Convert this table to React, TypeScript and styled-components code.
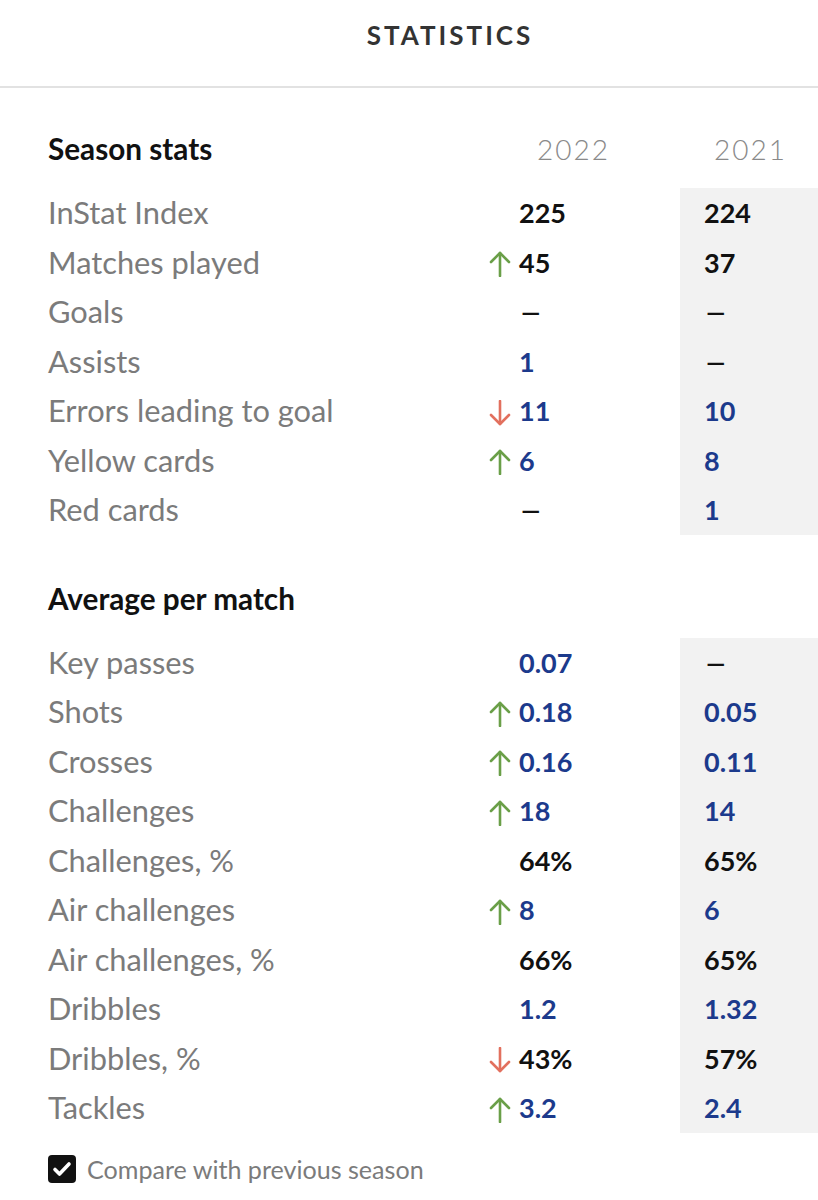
import React from "react";
import styled, { createGlobalStyle } from "styled-components";

const Global = createGlobalStyle`
  html, body { margin: 0; padding: 0; background: #ffffff; }
  body { font-family: "Lato", "Noto Sans", sans-serif; -webkit-font-smoothing: antialiased; }
  * { box-sizing: border-box; }
`;

const Page = styled.div`
  width: 818px;
  background: #fff;
`;

const TitleBar = styled.header`
  height: 88px;
  display: flex;
  align-items: center;
  justify-content: center;
  border-bottom: 2px solid #e2e2e2;
  padding: 0 0 16px 82px;
`;

const Title = styled.h1`
  margin: 0;
  font-size: 26px;
  font-weight: 700;
  letter-spacing: 3px;
  color: #333;
`;

const Section = styled.section<{ $top: number }>`
  margin-top: ${(p) => p.$top}px;
  display: grid;
  grid-template-columns: 1fr 200px 138px;
`;

const HeadLabel = styled.div`
  height: 76px;
  display: flex;
  align-items: center;
  padding-left: 48px;
  padding-bottom: 3px;
  font-size: 29.7px;
  font-weight: 700;
  color: #111;
`;

const Year = styled.div<{ $pad: number }>`
  height: 76px;
  display: flex;
  align-items: center;
  padding-left: ${(p) => p.$pad}px;
  padding-bottom: 3px;
  font-size: 28px;
  font-weight: 300;
  letter-spacing: 2px;
  color: #8a8a8a;
`;

const Label = styled.div`
  height: 49.5px;
  display: flex;
  align-items: center;
  padding-left: 48px;
  font-size: 30.8px;
  color: #7b7b7b;
`;

const Cell = styled.div<{ $shade?: boolean }>`
  height: 49.5px;
  display: flex;
  align-items: center;
  gap: 8px;
  padding-left: ${(p) => (p.$shade ? 24 : 9)}px;
  background: ${(p) => (p.$shade ? "#f2f2f2" : "transparent")};
`;

const ArrowSlot = styled.span`
  width: 22px;
  height: 26px;
  margin-top: 4px;
  display: flex;
  align-items: center;
  justify-content: center;
`;

const Value = styled.span<{ $link?: boolean }>`
  font-size: 27px;
  font-weight: 700;
  color: ${(p) => (p.$link ? "#1c3a8c" : "#111")};
`;

const Dash = styled.span`
  display: inline-block;
  transform: scaleX(1.5);
  transform-origin: left center;
`;

const Footer = styled.label`
  display: flex;
  align-items: center;
  gap: 11px;
  padding: 21px 0 0 48px;
`;

const Box = styled.span`
  width: 28px;
  height: 28px;
  border-radius: 4px;
  background: #111;
  display: flex;
  align-items: center;
  justify-content: center;
`;

const FooterText = styled.span`
  font-size: 25.1px;
  color: #7b7b7b;
`;

type Dir = "up" | "down" | undefined;
type V = { v: string; link?: boolean; dir?: Dir };
type Row = { label: string; a: V; b: V };

const Arrow = ({ dir }: { dir: "up" | "down" }) => {
  const color = dir === "up" ? "#6a9f48" : "#e2705e";
  return (
    <svg width="22" height="26" viewBox="0 0 22 26">
      <g stroke={color} strokeWidth="2.6" fill="none" strokeLinecap="round" strokeLinejoin="round">
        {dir === "up" ? (
          <>
            <path d="M11 25V2" />
            <path d="M2 11l9-9 9 9" />
          </>
        ) : (
          <>
            <path d="M11 1v23" />
            <path d="M2 15l9 9 9-9" />
          </>
        )}
      </g>
    </svg>
  );
};

const D = "–";

const season: Row[] = [
  { label: "InStat Index", a: { v: "225" }, b: { v: "224" } },
  { label: "Matches played", a: { v: "45", dir: "up" }, b: { v: "37" } },
  { label: "Goals", a: { v: D }, b: { v: D } },
  { label: "Assists", a: { v: "1", link: true }, b: { v: D } },
  { label: "Errors leading to goal", a: { v: "11", link: true, dir: "down" }, b: { v: "10", link: true } },
  { label: "Yellow cards", a: { v: "6", link: true, dir: "up" }, b: { v: "8", link: true } },
  { label: "Red cards", a: { v: D }, b: { v: "1", link: true } },
];

const average: Row[] = [
  { label: "Key passes", a: { v: "0.07", link: true }, b: { v: D } },
  { label: "Shots", a: { v: "0.18", link: true, dir: "up" }, b: { v: "0.05", link: true } },
  { label: "Crosses", a: { v: "0.16", link: true, dir: "up" }, b: { v: "0.11", link: true } },
  { label: "Challenges", a: { v: "18", link: true, dir: "up" }, b: { v: "14", link: true } },
  { label: "Challenges, %", a: { v: "64%" }, b: { v: "65%" } },
  { label: "Air challenges", a: { v: "8", link: true, dir: "up" }, b: { v: "6", link: true } },
  { label: "Air challenges, %", a: { v: "66%" }, b: { v: "65%" } },
  { label: "Dribbles", a: { v: "1.2", link: true }, b: { v: "1.32", link: true } },
  { label: "Dribbles, %", a: { v: "43%", dir: "down" }, b: { v: "57%" } },
  { label: "Tackles", a: { v: "3.2", link: true, dir: "up" }, b: { v: "2.4", link: true } },
];

const Val = ({ d }: { d: V }) => (
  <Value $link={d.link}>{d.v === D ? <Dash>{D}</Dash> : d.v}</Value>
);

const Block = ({ title, rows, top, years }: { title: string; rows: Row[]; top: number; years?: boolean }) => (
  <Section $top={top}>
    <HeadLabel>{title}</HeadLabel>
    <Year $pad={57}>{years ? "2022" : ""}</Year>
    <Year $pad={34}>{years ? "2021" : ""}</Year>
    {rows.map((r) => (
      <React.Fragment key={r.label}>
        <Label>{r.label}</Label>
        <Cell>
          <ArrowSlot>{r.a.dir && <Arrow dir={r.a.dir} />}</ArrowSlot>
          <Val d={r.a} />
        </Cell>
        <Cell $shade>
          <Val d={r.b} />
        </Cell>
      </React.Fragment>
    ))}
  </Section>
);

export default function App() {
  return (
    <Page>
      <Global />
      <TitleBar>
        <Title>STATISTICS</Title>
      </TitleBar>
      <Block title="Season stats" rows={season} top={24} years />
      <Block title="Average per match" rows={average} top={27} />
      <Footer>
        <Box>
          <svg width="20" height="16" viewBox="0 0 20 16">
            <path d="M3 8.5l4.5 4.5L17 3" stroke="#fff" strokeWidth="3.6" fill="none" strokeLinecap="round" strokeLinejoin="round" />
          </svg>
        </Box>
        <FooterText>Compare with previous season</FooterText>
      </Footer>
    </Page>
  );
}
